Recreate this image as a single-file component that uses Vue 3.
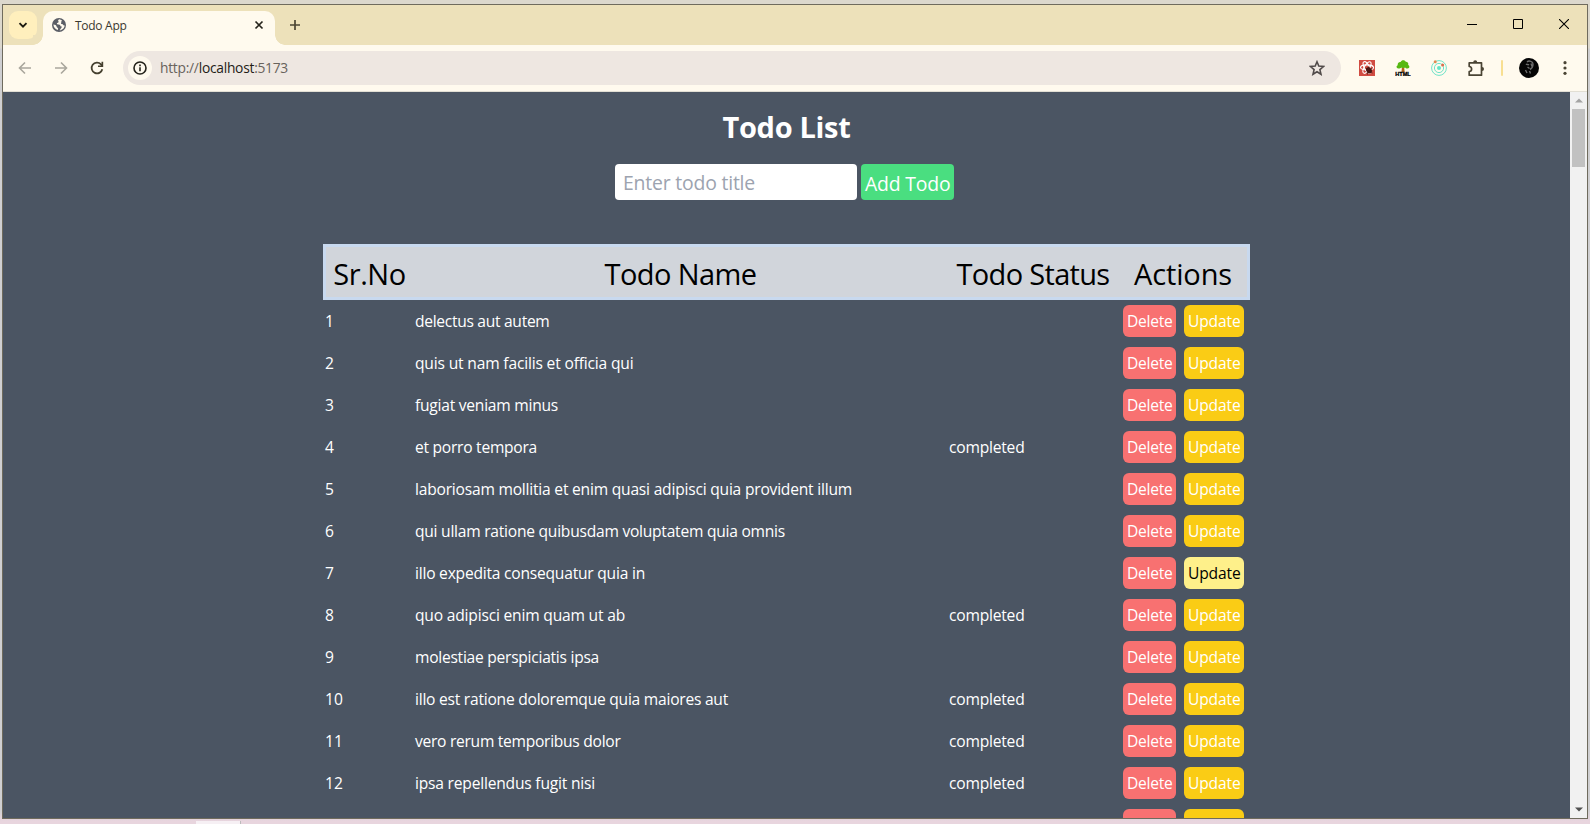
<script setup>
const todos = [
  { title: 'delectus aut autem', w: 134.5 },
  { title: 'quis ut nam facilis et officia qui', w: 218.5 },
  { title: 'fugiat veniam minus', w: 143 },
  { title: 'et porro tempora', w: 122, done: true },
  { title: 'laboriosam mollitia et enim quasi adipisci quia provident illum', w: 437 },
  { title: 'qui ullam ratione quibusdam voluptatem quia omnis', w: 370 },
  { title: 'illo expedita consequatur quia in', w: 230, hover: true },
  { title: 'quo adipisci enim quam ut ab', w: 210, done: true },
  { title: 'molestiae perspiciatis ipsa', w: 184 },
  { title: 'illo est ratione doloremque quia maiores aut', w: 313, done: true },
  { title: 'vero rerum temporibus dolor', w: 205.5, done: true },
  { title: 'ipsa repellendus fugit nisi', w: 180, done: true }
]

// Spreads the letters so that the label takes the given width in pixels.
const vFit = {
  mounted(el, { value }) {
    const n = el.textContent.length
    if (!n || !value) return
    const w = el.getBoundingClientRect().width
    el.style.letterSpacing = (value - w) / n + 'px'
  }
}
</script>

<template>
  <div class="desktop">
    <div class="taskpiece"></div>
    <div class="window">
      <header class="tabstrip">
        <div class="tabsearch">
          <svg width="10" height="10" viewBox="0 0 10 10"><path d="M1.5 3.2 5 6.7 8.5 3.2" fill="none" stroke="#1c1a10" stroke-width="1.9" /></svg>
        </div>
        <div class="tab">
          <svg class="globe" width="14" height="14" viewBox="0 0 14 14">
            <circle cx="7" cy="7" r="7" fill="#5b5e66" />
            <path d="M7.2 1.3c-.9.7-1.5 1.5-.7 2.2.8.5-.4 1.3-1.3 1.6-.8.4-.2 1.3.8 1.3 1.4 0 2.2.3 2.4 1.3.2.8 1.3.4 1.3 1.3 0 1-.8 1.1-1.2 2.1-.2.6-.5 1-.9 1.3 3-.2 5-2.5 5.1-5.1-.6.5-1.3.2-1.6-.6-.4-.9-1.4-.5-2-.9-.6-.6.6-1.2.3-2-.3-.5.3-.9.7-1.3C9.200 1.800 8.100 1.400 7.200 1.300ZM1.400 6.600c.1 2.800 2 4.800 4.500 5.300 0-.7.4-1 .1-1.600-.4-.7-1.400-.8-1.400-1.700-.1-1.200-1.600-1.900-3.200-2Z" fill="#fffaee" />
          </svg>
          <span class="tabname"><span v-fit="51.500" class="fit">Todo App</span></span>
          <svg class="tabclose" width="10" height="10" viewBox="0 0 10 10"><path d="m1.500 1.500 7 7m0-7-7 7" stroke="#25231b" stroke-width="1.700" /></svg>
        </div>
        <svg class="newtab" width="12" height="12" viewBox="0 0 12 12"><path d="M6 1v10M1 6h10" stroke="#4b4533" stroke-width="1.700" /></svg>
        <div class="winctl">
          <svg width="10" height="10" viewBox="0 0 10 10"><path d="M0 5.500h10" stroke="#000" /></svg>
          <svg width="10" height="10" viewBox="0 0 10 10"><path d="M.5.5h9v9h-9Z" fill="none" stroke="#000" /></svg>
          <svg width="10" height="10" viewBox="0 0 10 10"><path d="m0 0 10 10M10 0 0 10" stroke="#000" stroke-width="1.100" /></svg>
        </div>
      </header>

      <div class="toolbar">
        <svg class="nav" width="14" height="14" viewBox="0 0 14 14"><path d="M13 7H2M7 1.500 1.500 7 7 12.500" fill="none" stroke="#aaa79d" stroke-width="1.600" /></svg>
        <svg class="nav" width="14" height="14" viewBox="0 0 14 14"><path d="M1 7h11M7 1.500 12.500 7 7 12.500" fill="none" stroke="#aaa79d" stroke-width="1.600" /></svg>
        <svg class="nav" width="14" height="14" viewBox="0 0 14 14"><path d="M12.300 8.200A5.400 5.400 0 1 1 11 3.300l1.300 1.500" fill="none" stroke="#45402f" stroke-width="1.800" /><path d="M13.200.8v5.200H8V4.400h3.500V.8Z" fill="#45402f" /></svg>
        <div class="omnibox">
          <div class="info">
            <svg width="14" height="14" viewBox="0 0 14 14"><circle cx="7" cy="7" r="6" fill="none" stroke="#25231b" stroke-width="1.600" /><path d="M7 6.200V10.300M7 3.600v1.600" stroke="#25231b" stroke-width="1.600" /></svg>
          </div>
          <span class="url"><span v-fit="128" class="fit"><i>http://</i>localhost<i>:5173</i></span></span>
          <svg class="star" width="16" height="16" viewBox="0 0 16 16"><path d="m8 1.800 1.800 4.300 4.700.4-3.600 3.100 1.100 4.600L8 11.700l-4 2.500 1.100-4.600-3.600-3.100 4.700-.4Z" fill="none" stroke="#514b4a" stroke-width="1.600" /></svg>
        </div>
        <div class="extensions">
          <svg width="16" height="16" viewBox="0 0 16 16">
            <path d="M0 0h16v16H0Z" fill="#d14c42" />
            <g fill="none" stroke="#fff" stroke-width="1.100"><ellipse cx="8" cy="7.500" rx="6.500" ry="2.600" /><ellipse cx="8" cy="7.500" rx="6.500" ry="2.600" transform="rotate(60 8 7.500)" /><ellipse cx="8" cy="7.500" rx="6.500" ry="2.600" transform="rotate(120 8 7.500)" /></g>
            <ellipse cx="10" cy="10.300" rx="2.700" ry="3.300" fill="#4a1512" transform="rotate(-35 10 10.300)" /><path d="m6.500 8 7 5M10 6.500l-1.500 8M13.500 8l-6 5" stroke="#4a1512" stroke-width=".8" />
          </svg>
          <svg width="16" height="16" viewBox="0 0 16 16">
            <path d="M7 6h2l.7 6H6.500Z" fill="#b5651d" />
            <path d="M3.500 8.500C1.200 8.500.8 6 2.800 5.200 2.200 2.800 4.300 1.500 5.600 2 6.500-.5 10-.4 10.800 1.800c2-.1 2.900 1.600 2.300 3.200 2 .8 1.500 3.400-.6 3.400-1.300 0-2-.6-2.500-1-.9.8-3 .8-3.700.1-.7.6-1.500 1-2.800 1Z" fill="#57b812" />
            <text x="8" y="15.800" text-anchor="middle" textLength="15.500" lengthAdjust="spacingAndGlyphs" class="htmltag">HTML</text>
          </svg>
          <svg width="16" height="16" viewBox="0 0 16 16">
            <g fill="none" stroke="#6fe3c8" stroke-width="1"><circle cx="8" cy="8" r="7.400" /><circle cx="8" cy="8" r="4.600" /></g>
            <circle cx="8" cy="8" r="2" fill="#62e5c6" /><circle cx="4.200" cy="1.800" r="1.500" fill="#e08a52" /><circle cx="11.600" cy="5" r="1.500" fill="#dc6e4c" />
          </svg>
          <svg width="18" height="18" viewBox="0 0 18 18">
            <path d="M2.200 3.800h12.300v12.400H2.200v-3.700c3.200-.1 3.200-4.900 0-5Z" fill="none" stroke="#4a4434" stroke-width="1.700" stroke-linejoin="round" />
            <path d="M6.200 3.200a2 2 0 0 1 4 0ZM15 8a2 2 0 0 1 0 4Z" fill="#4a4434" />
          </svg>
        </div>
        <div class="divider"></div>
        <svg class="avatar" width="20" height="20" viewBox="0 0 20 20">
          <circle cx="10" cy="10" r="10" fill="#050505" />
          <path d="M8 4c2-2 6-.5 6 2s-1 4.500-3 5.500M7 6c1 1 2 0 3 1M12 5.500l1 3M8.500 9l2 1.500M6.500 12l1.500 3M10.500 13l1 2.500" fill="none" stroke="#6d6d6d" stroke-width="1.400" />
        </svg>
        <svg class="menu" width="4" height="14" viewBox="0 0 4 14"><g fill="#4a4434"><circle cx="2" cy="1.700" r="1.600" /><circle cx="2" cy="7" r="1.600" /><circle cx="2" cy="12.300" r="1.600" /></g></svg>
      </div>

      <div class="viewport">
        <main class="page">
          <h1><span v-fit="128" class="fit">Todo List</span></h1>
          <div class="form">
            <div class="input"><span v-fit="132" class="fit">Enter todo title</span></div>
            <button class="add"><span v-fit="85.500" class="fit">Add Todo</span></button>
          </div>
          <div class="table">
            <div class="row head">
              <div><span v-fit="72.500" class="fit">Sr.No</span></div>
              <div><span v-fit="152" class="fit">Todo Name</span></div>
              <div><span v-fit="153" class="fit">Todo Status</span></div>
              <div><span v-fit="98" class="fit">Actions</span></div>
            </div>
            <div v-for="(t, i) in todos" :key="i" class="row">
              <div class="cell">{{ i + 1 }}</div>
              <div class="cell"><span v-fit="t.w" class="fit">{{ t.title }}</span></div>
              <div class="cell"><span v-if="t.done" v-fit="75.500" class="fit">completed</span></div>
              <div class="actions">
                <button class="delete"><span v-fit="45.500" class="fit">Delete</span></button>
                <button class="update" :class="{ hover: t.hover }"><span v-fit="52.500" class="fit">Update</span></button>
              </div>
            </div>
            <div class="row">
              <div></div><div></div><div></div>
              <div class="actions">
                <button class="delete"></button>
                <button class="update"></button>
              </div>
            </div>
          </div>
        </main>
        <div class="scrollbar">
          <svg width="8" height="5" viewBox="0 0 8 5"><path d="M0 4.500 4 .5l4 4Z" fill="#a3a3a3" /></svg>
          <div class="thumb"></div>
          <svg class="down" width="8" height="5" viewBox="0 0 8 5"><path d="M0 .5h8l-4 4Z" fill="#505050" /></svg>
        </div>
      </div>
    </div>
  </div>
</template>

<style>
html, body { overflow: hidden; }
</style>

<style scoped>
* { box-sizing: border-box; }
.desktop {
  position: relative;
  width: 1590px;
  height: 824px;
  padding: 4px 2px 5px;
  overflow: hidden;
  background: linear-gradient(#dcd8cd 0, #dcd8cd 48px, #cfcfd1 49px, #cfcfd1 810px, #e8d5de 821px);
  font-family: "Open Sans", "Noto Sans", sans-serif;
}
.taskpiece { position: absolute; left: 196px; top: 821px; width: 45px; height: 3px; background: #f6f0f4; border-right: 1px solid #bbb; }
.window {
  display: flex;
  flex-direction: column;
  width: 1586px;
  height: 815px;
  border: 1px solid #6f6b5d;
  overflow: hidden;
}
.fit { display: inline-block; white-space: nowrap; }
svg { display: block; flex: none; }

.tabstrip { display: flex; flex: none; height: 40px; background: #ede1ba; }
.tabsearch {
  display: flex; align-items: center; justify-content: center;
  width: 28px; height: 28px; margin: 6px 6px 0 6px;
  border-radius: 9px; background: #ffefbd;
}
.tab {
  position: relative;
  display: flex; align-items: center;
  width: 232px; height: 34px; margin-top: 6px; padding: 0 11px 6px 9px;
  border-radius: 10px 10px 0 0; background: #fffaee;
}
.tab::before, .tab::after {
  content: ""; position: absolute; bottom: 0; width: 10px; height: 10px;
}
.tab::before { left: -10px; background: radial-gradient(circle at 0 0, #ede1ba 9.500px, #fffaee 10px); }
.tab::after { right: -10px; background: radial-gradient(circle at 100% 0, #ede1ba 9.500px, #fffaee 10px); }
.tabname { flex: 1; margin: 1px 0 0 9px; font-size: 12px; line-height: 16px; color: #3a382f; }
.newtab { margin: 14px 0 0 14px; }
.winctl { display: flex; gap: 36px; margin: 14px 18px 0 auto; }

.toolbar { display: flex; flex: none; align-items: center; height: 47px; padding-left: 15px; background: #fffaee; border-bottom: 1px solid #e2dfd4; }
.nav { margin-right: 22px; }
.omnibox {
  display: flex; align-items: center;
  width: 1218px; height: 34px; margin-left: -3px; padding: 0 16px 0 5px;
  border-radius: 17px; background: #eee7e1;
}
.info { display: flex; align-items: center; justify-content: center; width: 24px; height: 24px; border-radius: 50%; background: #fffaee; }
.url { flex: 1; margin-left: 8px; font-size: 13.800px; line-height: 20px; color: #1f1d17; }
.url i { font-style: normal; color: #68635c; }
.extensions { display: flex; align-items: center; gap: 20px; margin-left: 18px; }
.htmltag { font: 900 5.500px "Liberation Sans", sans-serif; fill: #000; stroke: #000; stroke-width: .3px; }
.divider { width: 2px; height: 16px; margin: 0 16px; border-radius: 1px; background: #f8df91; }
.menu { margin-left: 24px; }

.viewport { display: flex; flex: 1; min-height: 0; }
.page { width: 1567px; overflow: hidden; background: #4b5563; color: #fff; }
h1 { margin: 17px 0 0; font-size: 29px; line-height: 36px; font-weight: 700; text-align: center; }
.form { display: flex; gap: 4px; width: 339px; margin: 19px 0 0 612px; font-size: 19.400px; }
.input { width: 242px; height: 36px; padding: 0 8px; border-radius: 4px; background: #fff; color: #9ca3af; line-height: 38px; }
button { display: block; border: 0; color: #fff; font-family: inherit; text-align: left; }
.add { width: 93px; height: 36px; padding: 2px 4px 0; border-radius: 4px; background: #4ade80; font-size: 19.400px; line-height: 36px; white-space: nowrap; }
.table { width: 927px; margin: 44px 0 0 320px; font-size: 15.600px; }
.row { display: grid; grid-template-columns: 90px 534px 174px 129px; height: 42px; }
.head {
  height: 56px; border: 3px solid #c8d9ef; background: #d1d5db; color: #000;
  grid-template-columns: 87px 534px 174px 126px; font-size: 29px; line-height: 53px;
}
.head > div { text-align: center; }
.head > div:nth-child(2) { padding-left: 1px; }
.head > div:nth-child(n + 3) { padding-right: 2px; }
.cell { padding-left: 2px; line-height: 42px; }
.actions { display: flex; gap: 8px; padding: 5px 0 0 2px; }
.delete, .update { height: 32px; padding: 0 4px; border-radius: 6px; font-size: 15.600px; line-height: 32px; white-space: nowrap; }
.delete { width: 53px; background: #f87171; }
.update { width: 60px; background: #facc15; }
.update.hover { background: #fef08a; color: #000; }
.scrollbar { display: flex; flex-direction: column; align-items: center; width: 17px; padding: 6px 0; background: #f1f1f1; }
.thumb { width: 13px; height: 58px; margin-top: 6px; background: #c1c1c1; }
.down { margin-top: auto; }
</style>
